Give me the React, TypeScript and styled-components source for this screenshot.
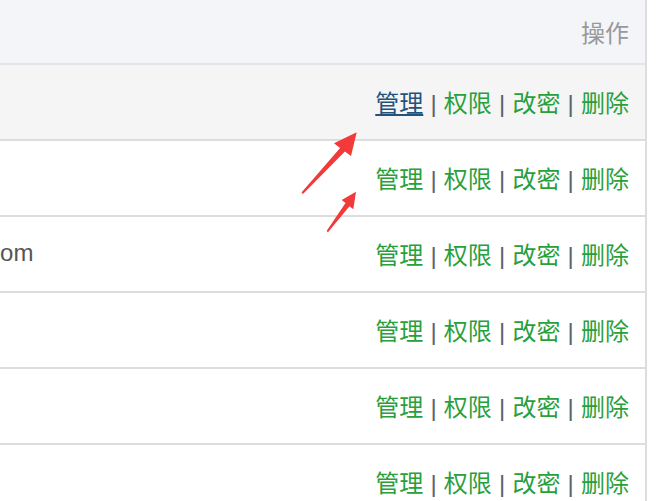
import styled, { createGlobalStyle } from "styled-components"

const users = [
  { name: "管理员", email: "admin@qq.com", active: true },
  { name: "张三", email: "zs@qq.com" },
  { name: "李四", email: "admin@example.com" },
  { name: "王五", email: "ww@163.com" },
  { name: "赵六", email: "zl@qq.com" },
  { name: "钱七", email: "qq@126.com" },
]

const actions = ["管理", "权限", "改密", "删除"]

export default function App() {
  return (
    <>
      <GlobalStyle />
      <Page>
        <Frame>
          <Table>
            <HeadRow>
              <HeadCell>用户名</HeadCell>
              <HeadCell>邮箱</HeadCell>
              <HeadCell $align="right">操作</HeadCell>
            </HeadRow>
            {users.map((u, i) => (
              <Row key={i} $active={!!u.active}>
                <Cell>{u.name}</Cell>
                <Cell>{u.email}</Cell>
                <Cell $align="right">
                  {actions.map((a, j) => (
                    <span key={a}>
                      {j > 0 && <Sep> | </Sep>}
                      <ActionLink href="#" $hover={!!u.active && j === 0}>
                        {a}
                      </ActionLink>
                    </span>
                  ))}
                </Cell>
              </Row>
            ))}
          </Table>
        </Frame>
        <Arrows width="657" height="501" viewBox="0 0 657 501">
          <polygon
            points="301.5,192.5 340.1,147.9 334,143.3 356.7,132.3 351,156 344.9,151.5 303,194"
            fill="#f23a3a"
          />
          <polygon
            points="326.6,231 345.5,203.1 341.7,200 356,191.7 353.3,209.3 349.5,206.2 328,232.2"
            fill="#f23a3a"
          />
        </Arrows>
      </Page>
    </>
  )
}

const GlobalStyle = createGlobalStyle`
  html, body {
    margin: 0;
    padding: 0;
    background: #ffffff;
  }
  body {
    font-family: "Liberation Sans", "Noto Sans CJK SC", sans-serif;
  }
`

const Page = styled.div`
  position: relative;
  width: 657px;
  height: 501px;
  overflow: hidden;
  background: #ffffff;
`

const Frame = styled.div`
  width: 645px;
  height: 501px;
  border-right: 2px solid #dddddd;
  overflow: hidden;
  display: flex;
  justify-content: flex-end;
  align-items: flex-start;
`

const Table = styled.div`
  flex-shrink: 0;
  width: 1060px;
`

const HeadRow = styled.div`
  display: grid;
  grid-template-columns: 200px 560px 300px;
  height: 65px;
  box-sizing: border-box;
  background: #f4f5f9;
  border-bottom: 2px solid #e1e4e9;
`

const Row = styled.div<{ $active: boolean }>`
  display: grid;
  grid-template-columns: 200px 560px 300px;
  height: 76px;
  box-sizing: border-box;
  background: ${(p) => (p.$active ? "#f5f5f5" : "#ffffff")};
  border-bottom: 2px solid #dddddd;
`

const HeadCell = styled.div<{ $align?: string }>`
  display: flex;
  align-items: center;
  justify-content: ${(p) => (p.$align === "right" ? "flex-end" : "flex-start")};
  padding: 0 16px;
  font-size: 24px;
  color: #999999;
  white-space: nowrap;
`

const Cell = styled.div<{ $align?: string }>`
  display: flex;
  align-items: center;
  justify-content: ${(p) => (p.$align === "right" ? "flex-end" : "flex-start")};
  padding: 0 16px 2px;
  font-size: 24px;
  color: #555555;
  white-space: pre;
`

const Sep = styled.span`
  color: #5a6270;
  padding: 0 0.5px;
`

const ActionLink = styled.a<{ $hover: boolean }>`
  color: ${(p) => (p.$hover ? "#23527c" : "#28a03c")};
  text-decoration: ${(p) => (p.$hover ? "underline" : "none")};
  text-decoration-thickness: 2px;
  text-underline-offset: 2px;
`

const Arrows = styled.svg`
  position: absolute;
  left: 0;
  top: 0;
  pointer-events: none;
`
